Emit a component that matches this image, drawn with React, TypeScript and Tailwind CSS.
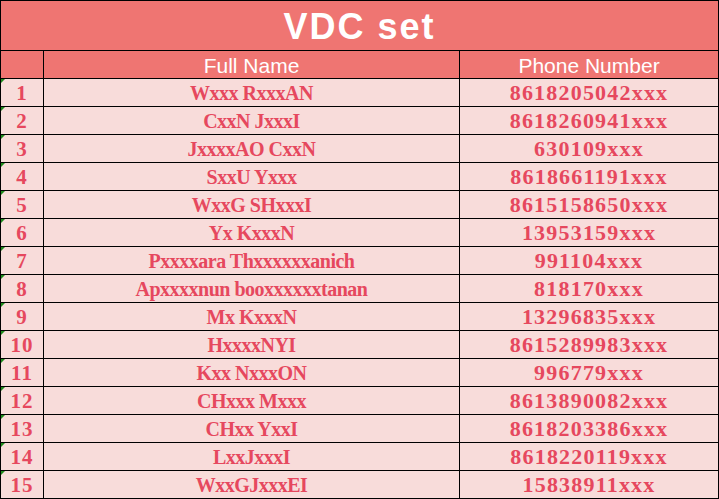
import React from "react";

const rows: [string, string][] = [
  ["Wxxx RxxxAN", "8618205042xxx"],
  ["CxxN JxxxI", "8618260941xxx"],
  ["JxxxxAO CxxN", "630109xxx"],
  ["SxxU Yxxx", "8618661191xxx"],
  ["WxxG SHxxxI", "8615158650xxx"],
  ["Yx KxxxN", "13953159xxx"],
  ["Pxxxxara Thxxxxxxanich", "991104xxx"],
  ["Apxxxxnun booxxxxxxtanan", "818170xxx"],
  ["Mx KxxxN", "13296835xxx"],
  ["HxxxxNYI", "8615289983xxx"],
  ["Kxx NxxxON", "996779xxx"],
  ["CHxxx Mxxx", "8613890082xxx"],
  ["CHxx YxxI", "8618203386xxx"],
  ["LxxJxxxI", "8618220119xxx"],
  ["WxxGJxxxEI", "15838911xxx"],
];

export default function App() {
  return (
    <div className="w-[719px] h-[499px] bg-black p-px grid grid-cols-[42px_415px_258px] grid-rows-[49px_27px_repeat(15,27px)] gap-px">
      <div className="col-span-3 bg-[#ef7572] flex items-center justify-center text-white font-bold text-[36px] tracking-[2px] leading-none pt-[2px] font-['Liberation_Sans',Arial,sans-serif]">
        VDC set
      </div>
      <div className="bg-[#ef7572]" />
      <div className="bg-[#ef7572] flex items-center justify-center text-white text-[21px] leading-none pt-[2px] font-['Liberation_Sans',Arial,sans-serif]">
        Full Name
      </div>
      <div className="bg-[#ef7572] flex items-center justify-center text-white text-[21px] leading-none pt-[2px] font-['Liberation_Sans',Arial,sans-serif]">
        Phone Number
      </div>
      {rows.map(([name, phone], i) => (
        <React.Fragment key={i}>
          <div className="relative bg-[#f8dcda] flex items-center justify-center text-[#e6485e] font-bold text-[21px] tracking-[1px] leading-none pt-[1px] font-['Liberation_Serif','Times_New_Roman',serif]">
            <span className="absolute left-0 top-0 w-0 h-0 border-t-[4px] border-r-[4px] border-t-[#1d8a1d] border-r-transparent" />
            {i + 1}
          </div>
          <div className="bg-[#f8dcda] flex items-center justify-center text-[#e6485e] font-bold text-[20px] tracking-[-0.5px] leading-none pt-[1px] font-['Liberation_Serif','Times_New_Roman',serif]">
            {name}
          </div>
          <div className="bg-[#f8dcda] flex items-center justify-center text-[#e6485e] font-bold text-[22px] tracking-[1.2px] leading-none pt-[1px] font-['Liberation_Serif','Times_New_Roman',serif]">
            {phone}
          </div>
        </React.Fragment>
      ))}
    </div>
  );
}
